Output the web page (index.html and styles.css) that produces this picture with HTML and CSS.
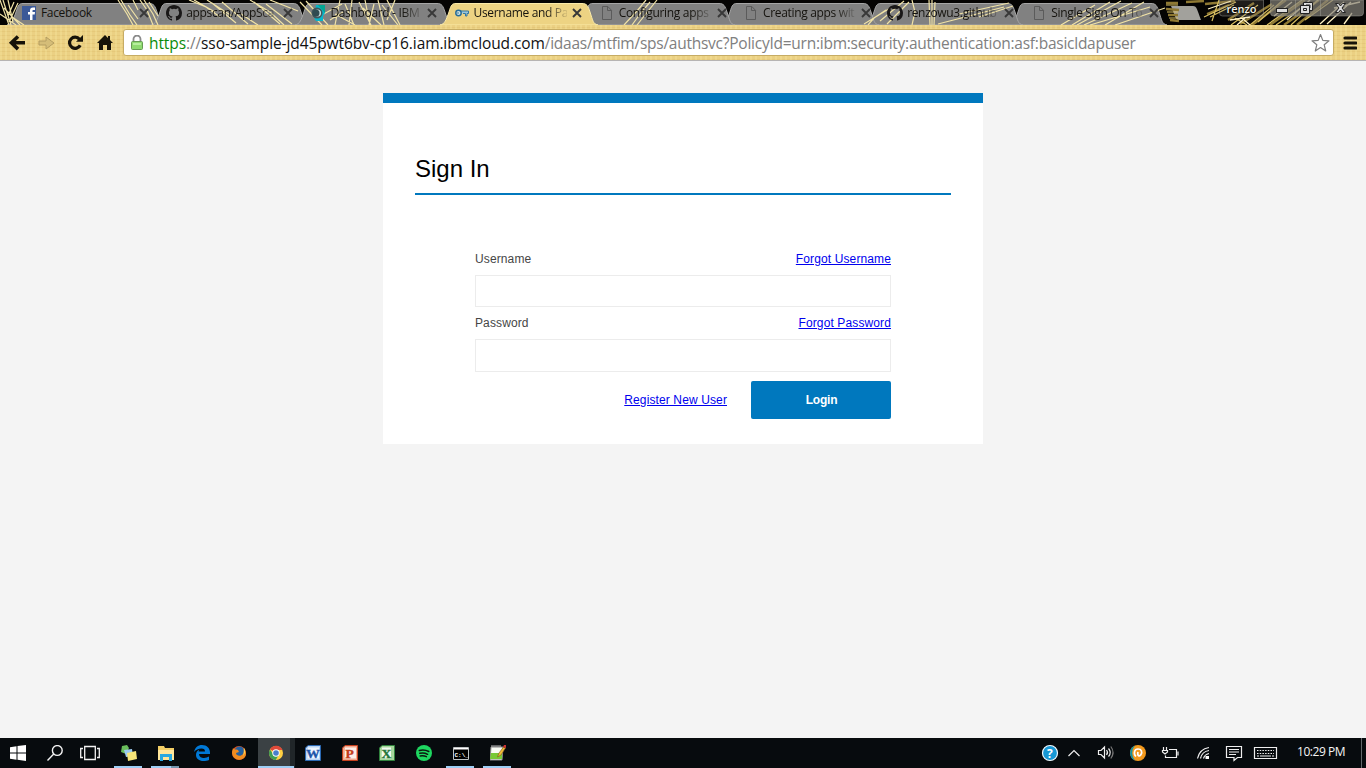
FILE: index.html
```html
<!DOCTYPE html>
<html lang="en">
<head>
<meta charset="utf-8">
<title>Username and Password</title>
<link rel="stylesheet" href="styles.css">
</head>
<body>
<svg class="defs" width="0" height="0">
  <defs>
    <symbol id="x" viewBox="0 0 10 10"><path d="M1 1l8 8M9 1l-8 8" fill="none" stroke="#383838" stroke-width="1.9"/></symbol>
    <symbol id="doc" viewBox="0 0 12 14"><path d="M1.500.5h5.300l3.700 3.800v9.200h-9zM6.500.5v4h4" fill="none" stroke="#5b5b5b"/></symbol>
    <symbol id="github" viewBox="0 0 16 16"><path fill="#191717" d="M8 0C3.58 0 0 3.58 0 8c0 3.54 2.29 6.53 5.47 7.59.4.07.55-.17.55-.38v-1.49c-2.01.37-2.53-.49-2.69-.94-.09-.23-.48-.94-.82-1.13-.28-.15-.68-.52-.01-.53.63-.01 1.08.58 1.23.82.72 1.21 1.87.87 2.33.66.07-.52.28-.87.51-1.07-1.78-.2-3.64-.89-3.64-3.95 0-.87.31-1.59.82-2.15-.08-.2-.36-1.02.08-2.12 0 0 .67-.21 2.2.82a7.5 7.5 0 0 1 4 0c1.53-1.04 2.2-.82 2.2-.82.44 1.1.16 1.92.08 2.12.51.56.82 1.27.82 2.15 0 3.07-1.87 3.75-3.65 3.95.29.25.54.73.54 1.48v2.2c0 .21.15.46.55.38A8 8 0 0 0 16 8c0-4.42-3.58-8-8-8z"/></symbol>
    <path id="tab" d="M-5 25C0 24 1 20 4 12 6 5 7 3.500 11 3.500H137C142 3.500 143 6 145 12 148 21 148 24 153 25Z"/>
  </defs>
</svg>

<header class="browser">
  <div class="tabstrip">
    <svg class="theme" width="1366" height="25" viewBox="0 0 1366 25">
      <rect width="1366" height="25" fill="#050403"/>
      <g fill="#818181" stroke="#a6a6a6" stroke-width="1">
        <use href="#tab" x="1014"/><use href="#tab" x="870"/><use href="#tab" x="726"/><use href="#tab" x="582"/>
        <use href="#tab" x="12"/><use href="#tab" x="156"/><use href="#tab" x="300"/>
      </g>
      <path d="M1173 6h20c4 0 4 4 8 14h-22c-4 0-4-5-8-14z" fill="#a2a19c"/>
      <g fill="none" stroke="#f0e2a6" stroke-width="1.200">
        <path d="M0 0l9 25M3 0l8 25M8 0l5 22M0 14l16 11M14 2l-6 14M18 3L9 22M12 17l12 8M4 8l16 17"/>
        <path d="M118 0l9 14 6 11M121 0l9 15 7 10M128 5l10 14M140 0l7 10 6 15M144 0l9 14 5 11M149 2l9 14M133 0l5 10"/>
        <path d="M189 0l17 7 14 10M194 0l21 12M207 0l25 16M212 3l24 20M222 2l26 22M250 0l20 12 14 13M254 2l26 22M266 4l26 20M270 0l28 11M241 14l17 11"/>
        <path d="M300 2l22 23M306 1l22 24M320 16l22-12M335 14l20 11M340 0l-5 25M345 4l9 21M352 0l-3 25M359 2l12 23M365 0l5 25M374 4l-5 21M378 0l6 25M382 5l16 20M387 0l13 25M395 0l-8 20M363 8l18 17M330 20l13-8"/>
        <path d="M646 0l-9 11-13 14M650 2l-10 12-8 11M657 0l-16 20-4 5M892 7l-28 17M886 10l-12 8-6 7"/>
        <path d="M912 0l3 12-3 13M929 0l1 25M932 0l0 25M935 2l-1 23M904 1l-24 20M909 2l-22 22M1004 7l-66 17M1009 3l-50 11M1013 6l-34 11"/>
        <path d="M1095 5l-34 20M1110 2l-38 23M1121 1l-44 24M1132 3l-48 22M1144 2l-39 23M1150 7l-60 18M1165 8l-50 17"/>
      </g>
      <g fill="none" stroke="#8f7933" stroke-width="2.400">
        <path d="M1166 3l12 0M1166 9l13 1M1168 15l10 0M1170 20l9 1M1207 14l22-9M1228 20l26-17M1240 24l32-20M1252 25l34-25M1270 25l35-25M1284 25l35-25M1297 25l31-25M1205 4l30-3M1186 2l18-1"/>
      </g>
      <g fill="none" stroke="#d8be60" stroke-width="1.200">
        <path d="M1166 5h12M1167 12h11M1169 18h9M1204 17l32-15M1210 17l24-12M1219 0l-7 21M1231 25l27-20M1235 18l12 7M1250 25l24-20M1258 22l25-22M1267 25l35-25M1276 25l32-22M1291 25l27-25M1305 20l28-20"/>
      </g>
      <g fill="none" stroke="#fff2c4" stroke-width="1.300">
        <path d="M1208 9l23-8M1230 20l20-3M1242 18l8 7M1245 18l-8 7M1274 16l18-14M1287 20l23-20M1320 24l24-22M1327 24l24-22M1344 24l8-11M1334 8l26-6"/>
      </g>
      <g fill="#85827b" fill-opacity=".7" stroke="#a5a39d" stroke-opacity=".45">
        <path d="M1219.500 0v13q0 3 3 3h39q2 0 2-3V0z" fill-opacity=".2"/>
        <path d="M1270.500 0v13q0 3 3 3h86q4 0 4-3V0zM1295.500 0v16M1320.500 0v16"/>
      </g>
      <g fill="#ddd" stroke="#222" stroke-width="1">
        <rect x="1276.500" y="8.500" width="11" height="4"/>
        <path fill-rule="evenodd" d="M1303.500 2.500h9v8h-9zM1306 5v3h4V5z"/><path fill-rule="evenodd" d="M1300.500 5.500h9v8h-9zM1303.500 8.500v2h3v-2z"/>
        <path d="M1335.500 3.500h3l2 2.500 2-2.500h3l-3.500 4.500 3.500 4.500h-3l-2-2.500-2 2.500h-3l3.500-4.500z"/>
      </g>
      <use href="#tab" x="445" fill="#edd383" stroke="#faeaa9"/>
    </svg>
    <nav class="tabs">
      <div class="tab"><svg class="fav" viewBox="0 0 14 14"><path fill="#3b5998" d="M0 0h14v14H0z"/><path fill="#fff" d="M8 14V8.500H6V6h2V4.500C8 2.500 9 1.500 11 1.500h2V4h-1.500C10.500 4 10.500 4.500 10.500 5v1H13l-.3 2.500h-2.200V14z"/></svg><span class="name">Facebook</span><svg class="close"><use href="#x"/></svg></div>
      <div class="tab"><svg class="fav wide"><use href="#github"/></svg><span class="name faded">appscan/AppSca</span><svg class="close"><use href="#x"/></svg></div>
      <div class="tab"><svg class="fav wide" viewBox="0 0 16 16"><path d="M6 0h9v8l-2 3v5H6l-2-3z" fill="#08b5cb"/><circle cx="7" cy="8" r="5.500" fill="#41565b"/><circle cx="7.500" cy="8" r="3.500" fill="#d0e4e3"/><circle cx="6" cy="8" r="3.500" fill="#304b51"/><path d="M8 0h7v8z" fill="#04a592"/></svg><span class="name faded">Dashboard - IBM</span><svg class="close"><use href="#x"/></svg></div>
      <div class="tab"><svg class="fav" viewBox="0 0 14 14"><path d="M4 5H13.500V7.500H12V10H10.500V7.500H8" fill="#9bc7dc" stroke="#3476a0"/><circle cx="3.500" cy="7" r="2.700" fill="#d2e4e3" stroke="#286d99" stroke-width="1.500"/><circle cx="3" cy="7" r=".8" fill="#286d99"/></svg><span class="name faded">Username and Pa</span><svg class="close"><use href="#x"/></svg></div>
      <div class="tab"><svg class="fav doc"><use href="#doc"/></svg><span class="name faded">Configuring apps</span><svg class="close"><use href="#x"/></svg></div>
      <div class="tab"><svg class="fav doc"><use href="#doc"/></svg><span class="name faded">Creating apps wit</span><svg class="close"><use href="#x"/></svg></div>
      <div class="tab"><svg class="fav wide"><use href="#github"/></svg><span class="name faded">renzowu3.github</span><svg class="close"><use href="#x"/></svg></div>
      <div class="tab"><svg class="fav doc"><use href="#doc"/></svg><span class="name faded">Single Sign On To</span><svg class="close"><use href="#x"/></svg></div>
      <span class="profile">renzo</span>
    </nav>
  </div>
  <div class="toolbar">
    <svg class="navicons" width="115" height="35" viewBox="0 0 115 35">
      <path d="M18 11.500l-6.500 6.300 6.500 6.300M12 17.800h13" fill="none" stroke="#171309" stroke-width="3.600"/>
      <path d="M39 16h7v-4l8 6-8 6v-4h-7z" fill="#d5bd78" stroke="#b49d60"/>
      <path d="M79.500 14.200a5.600 5.600 0 1 0 .7 6" fill="none" stroke="#171309" stroke-width="3.200"/><path d="M76 16.800h7V10z" fill="#171309"/>
      <path d="M97 18l8-8 3 3v-2h2v4l3 3h-2v7h-4v-5h-4v5h-4v-7z" fill="#171309"/>
    </svg>
    <div class="address">
      <svg class="lock" width="12" height="15" viewBox="0 0 12 15"><path d="M2.500 7V4a3.500 3.500 0 0 1 7 0v3" fill="none" stroke="#8a8a8a" stroke-width="1.800"/><rect x=".5" y="6.500" width="11" height="8" rx="1" fill="#8fda70" stroke="#679b54"/><path d="M2 8h8v2H2z" fill="#b7ee9e"/></svg>
      <span class="url"><span class="scheme">https</span><span class="rest">://</span><span class="host">sso-sample-jd45pwt6bv-cp16.iam.ibmcloud.com</span><span class="rest path">/idaas/mtfim/sps/authsvc?PolicyId=urn:ibm:security:authentication:asf:basicldapuser</span></span>
      <svg class="star" width="20" height="20" viewBox="0 0 20 20"><path d="M10.500 1.500l2.300 5.900 6.200.4-4.800 4 1.500 6.200-5.200-3.400-5.200 3.400 1.500-6.200-4.800-4 6.200-.4z" fill="#fff" stroke="#7f7f7f" stroke-width="1.200" stroke-linejoin="round"/></svg>
    </div>
    <svg class="menu" width="14" height="14" viewBox="0 0 14 14"><path d="M2 2h11M2 7h11M2 12h11" stroke="#171309" stroke-width="3.200" stroke-linecap="round"/></svg>
  </div>
</header>

<main class="page">
  <section class="card">
    <h1>Sign In</h1>
    <form class="form">
      <div class="row"><label for="user">Username</label><a href="#">Forgot Username</a></div>
      <input id="user" type="text">
      <div class="row"><label for="pass">Password</label><a href="#">Forgot Password</a></div>
      <input id="pass" class="pass" type="password">
      <div class="actions"><a href="#">Register New User</a><button type="button">Login</button></div>
    </form>
  </section>
</main>

<footer class="taskbar">
  <div class="apps">
    <span class="app"><svg viewBox="0 0 16 16"><path fill="#fff" d="M0 2.200l6.500-.9v6.200H0zM7.500 1.100L16 0v7.500H7.500zM0 8.500h6.500v6.200L0 13.800zM7.500 8.500H16V16l-8.500-1.200z"/></svg></span>
    <span class="app"><svg viewBox="0 0 16 16"><g fill="none" stroke="#f3f3f3" stroke-width="1.400"><circle cx="10.300" cy="5.500" r="4.900"/><path d="M6.700 9L.5 15.500"/></g></svg></span>
    <span class="app"><svg class="task" viewBox="0 0 20 16"><path d="M4.700 1.500h10.600v13H4.700zM3 3.500H.7v9H3M17 3.500h2.300v9H17" fill="none" stroke="#f3f3f3" stroke-width="1.300"/></svg></span>
    <span class="app open"><svg viewBox="0 0 16 16"><path d="M1 1l5-1 2 3-3 6-5-2z" fill="#69bd5b"/><path d="M3 5l8-1 1 7-7 1z" fill="#9dcbef"/><path d="M6 8l9-2 1 8-9 2z" fill="#f6e578"/></svg></span>
    <span class="app open stacked"><svg viewBox="0 0 16 16"><path d="M0 1h6l1 2h9v12H0z" fill="#f3cf66"/><path d="M0 5h16v10H0z" fill="#ffe69a"/><path d="M2 9h12v7h-3v-4H5v4H2z" fill="#28a8e0"/></svg></span>
    <span class="app"><svg viewBox="0 0 16 16"><path fill="#0079d7" d="M0 7C1 2.500 4 0 8 0c5 0 8 3.500 8 7.500V9H5c.2 3 2.500 4 5 4 2 0 3.500-.5 5-1.400V15c-1.500.7-3.500 1-5.500 1C5 16 2 13.500 2 10c0-2.500 1.200-4.500 3.500-5.500C4.800 5.200 4.700 6 4.600 6.500H11C11 4.500 10 3.500 7.500 3.500 4.500 3.500 1.800 4.800 0 7z"/></svg></span>
    <span class="app"><svg viewBox="0 0 16 16"><circle cx="8" cy="8" r="7" fill="#df541c"/><circle cx="8.500" cy="6.500" r="5" fill="#24609f"/><path d="M2 3c1 2 3 1 5 2l1 2-3 1c0 3 5 4 7 1 1-2 1-4 0-6 3 2 4 6 2 9-4 5-13 3-13-5z" fill="#f18c20"/><path d="M13 3c2 3 1 6-1 8 1-3 1-5 1-8" fill="#ffd354"/></svg></span>
    <span class="app open current"><svg viewBox="0 0 16 16"><circle cx="8" cy="8" r="7" fill="#ffd042"/><path d="M8 8L2 4.300A7 7 0 0 1 14.500 5H8z" fill="#df493a"/><path d="M2 4.400A7 7 0 0 0 7.700 15l3-5-3-2-3 .5z" fill="#3f9d54"/><circle cx="8" cy="8" r="3.700" fill="#fff"/><circle cx="8" cy="8" r="2.800" fill="#487ecb"/></svg></span>
    <span class="app"><svg viewBox="0 0 16 16"><path d="M3 .5h12.500v15H.5V3z" fill="#b9d5f5" stroke="#2b69b3"/><path d="M3 2.500h11v11H2.500z" fill="#eef6ff"/><text x="1.300" y="12.800" class="office">W</text></svg></span>
    <span class="app"><svg viewBox="0 0 16 16"><path d="M3 .5h12.500v15H.5V3z" fill="#f2a88d" stroke="#c6401e"/><path d="M3 2.500h11v11H2.500z" fill="#fbefe9"/><text x="3.500" y="13" class="office point">P</text></svg></span>
    <span class="app"><svg viewBox="0 0 16 16"><path d="M3 .5h12.500v15H.5V3z" fill="#a5d69b" stroke="#31823e"/><path d="M3 2.500h9v11H2.500z" fill="#f2faf0"/><text x="2.500" y="13" class="office excel">X</text></svg></span>
    <span class="app"><svg viewBox="0 0 16 16"><circle cx="8" cy="8" r="8" fill="#1ed760"/><path d="M3.300 5.500q5-1.300 9.500 1M3.800 8.300q4.200-1 7.800 1M4.200 10.900q3.400-.7 6.200.8" fill="none" stroke="#0b190f" stroke-width="1.500" stroke-linecap="round"/></svg></span>
    <span class="app open"><svg viewBox="0 0 16 16"><path d="M.5 2.500h15v12H.5z" fill="#000" stroke="#bfc3c4"/><path d="M1 3h14v1.500H1z" fill="#fff"/><text x="1.500" y="12" class="prompt">C:\_</text></svg></span>
    <span class="app open"><svg viewBox="0 0 16 16"><path d="M1 2h12l-1 13H0z" fill="#f8fbf4" stroke="#888"/><path d="M1 8h11v6H0z" fill="#78c936"/><path d="M2 0v3M4 0v3M6 0v3M8 0v3M10 0v3" stroke="#bbb"/><path d="M7.500 12l1.500-4 4.500-6 2 1-4.500 7z" fill="#f0bc38" stroke="#80531d" stroke-width=".6"/><path d="M13 2l3 1V0h-2z" fill="#c33"/></svg></span>
  </div>
  <svg class="tray" width="256" height="30" viewBox="0 0 256 30">
    <circle cx="20" cy="15" r="7.500" fill="#1798d5" stroke="#f5fbff" stroke-width="1.200"/><text x="17" y="19.500" class="help">?</text>
    <g fill="none" stroke="#eee" stroke-width="1.200">
      <path d="M38.500 18l5.500-5.500 5.500 5.500"/>
      <path d="M68.500 12.500h2.500l3.500-3.500v11L71 16.500h-2.500zM76.500 12q2 2.500 0 5M78.500 10.500q3.500 4 0 8"/><path d="M80.800 8.500q4.500 6 0 12" stroke="#777"/>
      <path d="M139 11.500h7.500v8h-11v-2M133.500 9v3M136.500 9v3M132.500 12.500h5v1.500l-2.500 2-2.500-2zM148 13.500v4"/>
      <path d="M167.500 20.500q2-9.500 11.500-11M170.500 20.500q1.500-7 8.500-8M173.500 20.500q1-4 5.500-5"/>
      <path d="M196.500 8.500h15v11h-4l-3.500 3v-3h-7.500zM199 11.500h10M199 14h10M199 16.500h7"/>
      <path d="M224.500 9.500h22v11h-22z"/><path d="M227 12.500h17M227 15.500h17" stroke-dasharray="1.500 1.200"/><path d="M227 18h2M230 18h11M242 18h2"/>
    </g>
    <path d="M175.500 18h3.500v3h-3.500z" fill="#fff"/>
    <circle cx="108" cy="15" r="8" fill="#f49a1d"/><path d="M105 7.600a8 8 0 0 0 0 14.800 11 11 0 0 1 0-14.800" fill="#138f9e"/><path d="M106 18.500c-3-3-1.500-7.500 2-7.500s4.500 3 3 5.500-4 1.500-3-2.500" fill="none" stroke="#fff" stroke-width="1.700"/>
  </svg>
  <time class="clock">10:29 PM</time>
  <span class="desktop"></span>
</footer>
</body>
</html>
```

FILE: styles.css
```css
* { box-sizing: border-box; }
body {
  margin: 0;
  width: 1366px;
  height: 768px;
  overflow: hidden;
  display: flex;
  flex-direction: column;
  background: #f4f4f4;
  font-family: "Liberation Sans", Arial, sans-serif;
}
.defs { position: absolute; }
svg { display: block; flex: none; }

.browser { height: 61px; flex: none; font-family: "Open Sans", "Noto Sans", sans-serif; }
.tabstrip { position: relative; height: 25px; }
.theme { position: absolute; left: 0; top: 0; }
.tabs { position: relative; display: flex; height: 25px; padding-left: 22px; }
.tab { width: 144.2px; flex: none; display: flex; align-items: center; }
.fav { width: 14px; height: 14px; margin-right: 5px; }
.fav.wide { width: 16px; height: 16px; margin-right: 4px; }
.fav.doc { width: 12px; height: 14px; margin-left: 2px; margin-right: 6px; }
.name {
  width: 93px;
  white-space: nowrap;
  font-size: 12px;
  line-height: 20px;
  letter-spacing: -.33px;
  color: #15130e;
}
.wide + .name { width: 92px; }
.faded {
  -webkit-mask-image: linear-gradient(90deg, #000 72px, rgba(0,0,0,.15) 92px);
  mask-image: linear-gradient(90deg, #000 72px, rgba(0,0,0,.15) 92px);
}
.close { width: 10px; height: 10px; margin-left: 5px; }
.profile {
  margin-left: 51px;
  font-size: 11px;
  font-weight: 600;
  line-height: 18px;
  color: #f5f2e8;
  text-shadow: 0 0 2px #000, 0 0 2px #000;
}

.toolbar {
  height: 36px;
  display: flex;
  align-items: flex-start;
  border-bottom: 1px solid #b6b4b3;
  background:
    repeating-linear-gradient(90deg, rgba(255,244,173,.22) 0 2px, transparent 2px 5px),
    repeating-linear-gradient(0deg, rgba(179,133,37,.1) 0 1px, transparent 1px 4px),
    #ebd083;
}
.address {
  width: 1211px;
  height: 27px;
  margin: 4px 0 0 8px;
  padding: 0 3px 0 7px;
  display: flex;
  align-items: center;
  background: #fff;
  border: 1px solid #c6ac64;
  border-radius: 3px;
}
.lock { margin-right: 6px; }
.url { flex: 1; white-space: nowrap; font-size: 15.5px; line-height: 24px; letter-spacing: -.1px; }
.scheme { color: #0b8b0b; }
.host { color: #111; }
.rest { color: #808080; }
.path { letter-spacing: -.25px; }
.menu { margin: 11px 0 0 9px; }

.page { flex: 1; padding-top: 32px; }
.card {
  width: 600px;
  height: 351px;
  margin: 0 auto;
  padding: 47px 32px 0;
  background: #fff;
  border-top: 10px solid #0078be;
}
.card h1 {
  height: 45px;
  margin: 0;
  border-bottom: 2px solid #0078be;
  color: #000;
  font-size: 24px;
  font-weight: 400;
  line-height: 37px;
}
.form { padding: 48px 60px 0; color: #464646; font-size: 12px; letter-spacing: .12px; }
.row { height: 32px; display: flex; justify-content: space-between; line-height: 32px; }
.form a { color: #0000ee; text-decoration: underline; }
.form input {
  display: block;
  width: 416px;
  height: 32px;
  margin: 0;
  border: 1px solid #ececec;
  background: #fff;
}
.form .pass { height: 33px; }
.actions { display: flex; justify-content: flex-end; align-items: center; gap: 24px; margin-top: 9px; }
.actions button {
  width: 140px;
  height: 38px;
  padding: 0 0 0 1px;
  border: 0;
  border-radius: 2px;
  background: #0078be;
  color: #fff;
  font: bold 12px "Liberation Sans", Arial, sans-serif;
  letter-spacing: -.2px;
}

.taskbar { height: 30px; flex: none; display: flex; background: #070b0e; }
.apps { width: 1030px; display: flex; }
.app { width: 36.9px; height: 30px; flex: none; display: flex; align-items: center; justify-content: center; }
.app svg { width: 16px; height: 16px; margin-left: -1px; }
.app .task { width: 20px; margin-left: -4px; }
.open { background: linear-gradient(#9dcef5, #9dcef5) 40% 100% / 28px 2px no-repeat; }
.stacked { background: linear-gradient(90deg, #9dcef5 20px, #7495ae 20px) 40% 100% / 28px 2px no-repeat; }
.current { background: linear-gradient(#9dcef5, #9dcef5) 0 100% / 36px 2px no-repeat, linear-gradient(90deg, #3b4144 32px, #202629 32px); }
.office { font: bold 13.5px "Liberation Serif", serif; fill: #1d54a8; stroke: #1d54a8; stroke-width: .4px; }
.point { fill: #c43d1b; stroke: #c43d1b; }
.excel { fill: #26763a; stroke: #26763a; }
.prompt { font: bold 6px "Liberation Mono", monospace; fill: #fff; }
.help { font: bold 12px "Open Sans", sans-serif; fill: #fff; }
.clock {
  width: 75px;
  padding-left: 11px;
  color: #f5f5f5;
  font: 12px/28px "Open Sans", "Noto Sans", sans-serif;
  letter-spacing: -.45px;
}
.desktop { border-left: 1px solid #62686b; }
```
